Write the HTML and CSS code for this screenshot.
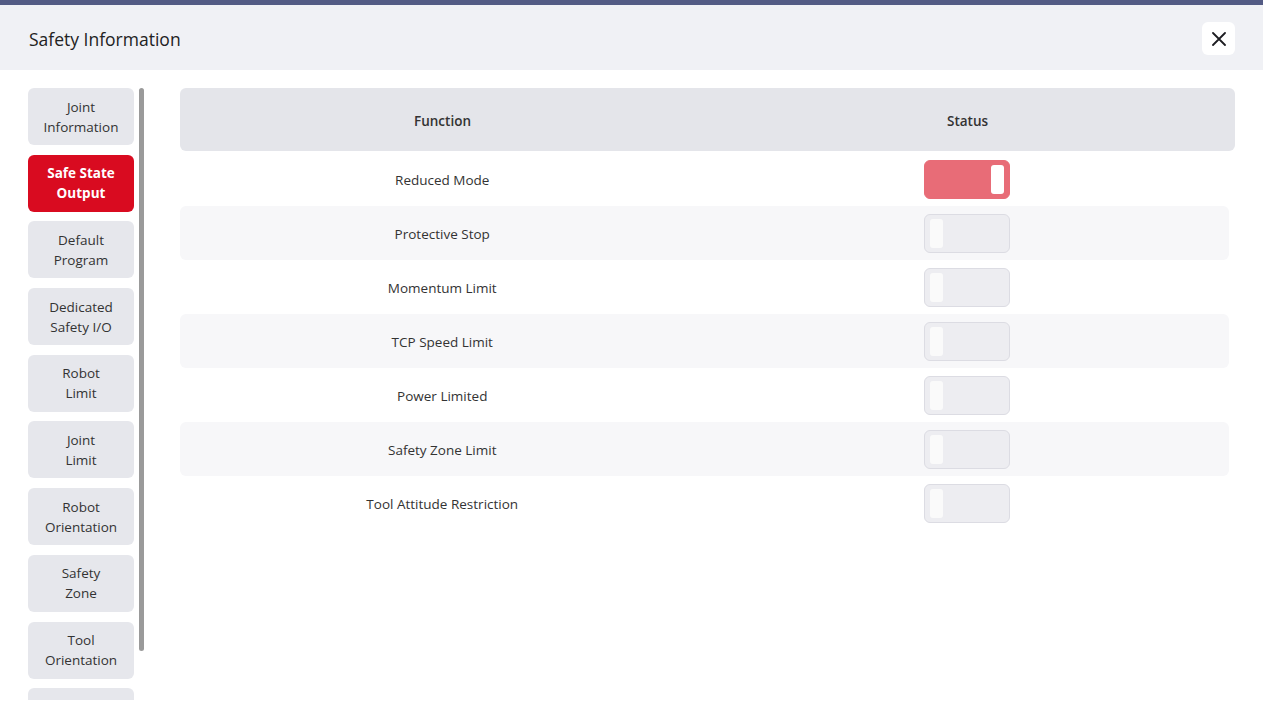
FILE: index.html
```html
<!DOCTYPE html>
<html lang="en">

<head>
    <meta charset="UTF-8">
    <meta name="viewport" content="width=device-width, initial-scale=1.0">
    <title>Safety Information</title>
    <link rel="stylesheet" href="styles.css">
</head>

<body>

    <div class="modal">
        <div class="modal-head">
            <h1>Safety Information</h1>
            <button class="close-btn" aria-label="Close">
                <svg width="14" height="14" viewBox="0 0 14 14">
                    <path d="M1 1L13 13M13 1L1 13" stroke="#1d1d22" stroke-width="1.8" stroke-linecap="round" />
                </svg>
            </button>
        </div>

        <div class="modal-body">
            <div class="side">
                <div class="side-list">
                    <button class="side-btn">Joint<br>Information</button>
                    <button class="side-btn active">Safe State<br>Output</button>
                    <button class="side-btn">Default<br>Program</button>
                    <button class="side-btn">Dedicated<br>Safety I/O</button>
                    <button class="side-btn">Robot<br>Limit</button>
                    <button class="side-btn">Joint<br>Limit</button>
                    <button class="side-btn">Robot<br>Orientation</button>
                    <button class="side-btn">Safety<br>Zone</button>
                    <button class="side-btn">Tool<br>Orientation</button>
                    <button class="side-btn" aria-label="Tool Position"></button>
                </div>
                <div class="scroll-thumb"></div>
            </div>

            <div class="table">
                <div class="table-head">
                    <div class="cell">Function</div>
                    <div class="cell">Status</div>
                </div>
                <div id="rows"></div>
            </div>
        </div>
    </div>

    <script>
        const functions = [
            { name: "Reduced Mode", on: true },
            { name: "Protective Stop", on: false },
            { name: "Momentum Limit", on: false },
            { name: "TCP Speed Limit", on: false },
            { name: "Power Limited", on: false },
            { name: "Safety Zone Limit", on: false },
            { name: "Tool Attitude Restriction", on: false }
        ];

        const rows = document.getElementById("rows");
        functions.forEach((f, i) => {
            const row = document.createElement("div");
            row.classList.add("row");
            if (i % 2 === 1) row.classList.add("striped");
            row.innerHTML = `<div class="cell name">${f.name}</div>
                <div class="cell"><span class="toggle${f.on ? " on" : ""}"><span class="knob"></span></span></div>`;
            rows.appendChild(row);
        });
    </script>
</body>

</html>
```

FILE: styles.css
```css
* {
    box-sizing: border-box;
}

body {
    margin: 0;
    font-family: "Open Sans", "Noto Sans", Arial, sans-serif;
    color: #333;
    background: #fff;
}

.modal {
    border-top: 5px solid #535b84;
    height: 715px;
    overflow: hidden;
}

.modal-head {
    height: 65px;
    background: #f0f1f5;
    display: flex;
    align-items: center;
    justify-content: space-between;
    padding: 0 28px 0 29px;
}

.modal-head h1 {
    margin: 0 0 -2px 0;
    font-size: 17.5px;
    font-weight: 500;
    color: #222;
}

.close-btn {
    width: 33px;
    height: 33px;
    border: none;
    border-radius: 6px;
    background: #fff;
    display: flex;
    align-items: center;
    justify-content: center;
    padding: 0;
    margin-top: 2px;
}

.modal-body {
    display: flex;
    padding: 18px 28px 0 28px;
    gap: 36px;
}

.side {
    display: flex;
    gap: 5px;
    height: 612px;
    overflow: hidden;
    flex-shrink: 0;
}

.side-list {
    display: flex;
    flex-direction: column;
    gap: 9.7px;
    width: 106px;
}

.side-btn {
    height: 57px;
    flex-shrink: 0;
    border: none;
    border-radius: 6px;
    background: #e6e7ec;
    font-family: inherit;
    font-size: 13.5px;
    line-height: 20px;
    color: #333;
    padding: 0;
}

.side-btn.active {
    background: #d90b20;
    color: #fff;
    font-weight: 700;
}

.scroll-thumb {
    width: 5px;
    height: 563px;
    background: #9a9a9a;
    border-radius: 3px;
}

.table {
    flex: 1;
    font-size: 13.5px;
}

.table-head {
    display: flex;
    height: 63px;
    background: #e4e5ea;
    border-radius: 6px;
    padding: 3px 5px 0 0;
    font-weight: 600;
    margin-bottom: 1px;
}

.row {
    display: flex;
    height: 54px;
    margin-right: 6px;
    border-radius: 6px;
}

.row.striped {
    background: #f7f7f9;
}

.cell {
    flex: 1;
    display: flex;
    align-items: center;
    justify-content: center;
}

.cell.name {
    padding-top: 2px;
}

.toggle {
    width: 86px;
    height: 39px;
    border-radius: 6px;
    background: #ededf1;
    border: 1px solid #dcdce3;
    display: flex;
    align-items: center;
    padding: 0 5px;
}

.toggle.on {
    background: #e86c77;
    border-color: #e86c77;
    justify-content: flex-end;
}

.knob {
    width: 13px;
    height: 29px;
    border-radius: 3px;
    background: #fafafa;
}

.toggle.on .knob {
    background: #fff;
}
```
